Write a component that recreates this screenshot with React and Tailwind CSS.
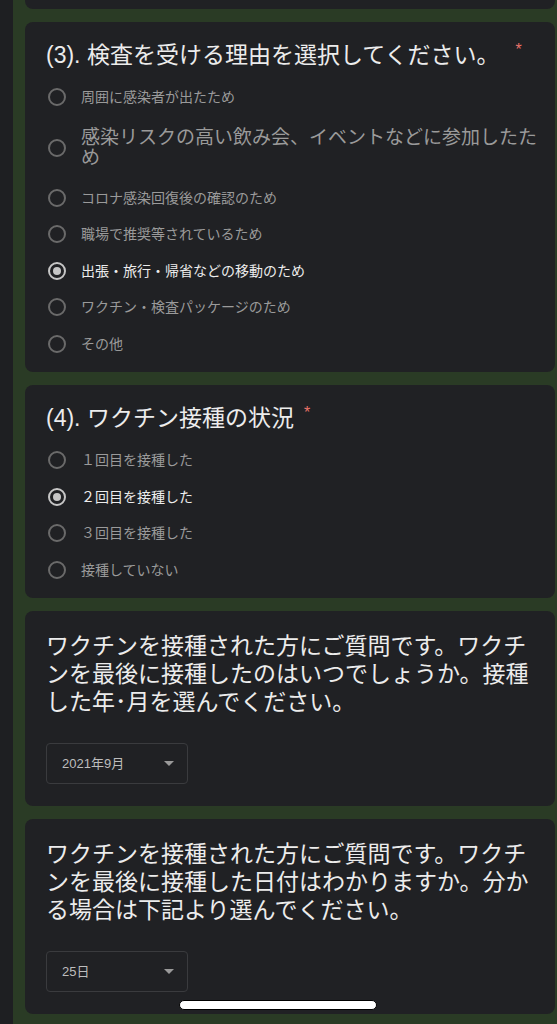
const font = "font-['Liberation_Sans','Noto_Sans_CJK_JP',sans-serif]";

const reasons = [
  { label: "周囲に感染者が出たため" },
  { label: "感染リスクの高い飲み会、イベントなどに参加したた", tail: "め", big: true },
  { label: "コロナ感染回復後の確認のため" },
  { label: "職場で推奨等されているため" },
  { label: "出張・旅行・帰省などの移動のため", checked: true },
  { label: "ワクチン・検査パッケージのため" },
  { label: "その他" },
];

const doses = [
  { label: "１回目を接種した" },
  { label: "２回目を接種した", checked: true },
  { label: "３回目を接種した" },
  { label: "接種していない" },
];

const Radio = ({ checked }) => (
  <span
    className={
      "ml-[2px] flex h-[18px] w-[18px] shrink-0 items-center justify-center rounded-full border-2 " +
      (checked ? "border-[#c6c6c6]" : "border-[#6a6a6a]")
    }
  >
    {checked && <span className="h-[8px] w-[8px] rounded-full bg-[#c6c6c6]" />}
  </span>
);

const Option = ({ label, tail, big, checked }) => (
  <div className={"flex items-center gap-[15px] " + (big ? "h-[64px]" : "h-[36.5px]")}>
    <Radio checked={checked} />
    {big ? (
      <span className="text-[19px] leading-[20px] text-[#9a9a9a]">
        {label}
        <br />
        {tail}
      </span>
    ) : (
      <span className={"text-[14px] leading-[18px] " + (checked ? "text-[#ececec]" : "text-[#9a9a9a]")}>
        {label}
      </span>
    )}
  </div>
);

const Card = ({ children, className = "" }) => (
  <div className={"rounded-[8px] bg-[#202124] pl-[21px] pr-[18px] " + className}>{children}</div>
);

const Dropdown = ({ value }) => (
  <div className="flex h-[41.5px] w-[142px] items-center justify-between rounded-[4px] border border-[#3a3b3e] pl-[15px] pr-[13px]">
    <span className="text-[13px] text-[#bdbdbd]">{value}</span>
    <svg width="10" height="5" viewBox="0 0 10 5">
      <path d="M0 0h10L5 5z" fill="#9a9a9a" />
    </svg>
  </div>
);

export default function App() {
  return (
    <div className={"relative flex h-[1024px] w-[557px] overflow-hidden bg-[#1e1f22] " + font}>
      <div className="w-[13px] shrink-0 bg-[#1e1f22]" />
      <div className="flex flex-1 flex-col gap-[13px] bg-[#2a3b25] pl-[12px] pr-[2px]">
        <div className="h-[9px] shrink-0 rounded-b-[8px] bg-[#202124]" />

        <Card className="pt-[18px] pb-[10px]">
          <div className="flex h-[30px] items-center text-[23px] leading-[30px] text-[#ececec]">
            <span>(3). 検査を受ける理由を選択してください。</span>
            <span className="ml-[16px] -mt-[10px] text-[16px] text-[#e8736a]">*</span>
          </div>
          <div className="mt-[9px] flex flex-col">
            {reasons.map((r) => (
              <Option key={r.label} {...r} />
            ))}
          </div>
        </Card>

        <Card className="pt-[18px] pb-[10px]">
          <div className="flex h-[30px] items-center text-[23px] leading-[30px] text-[#ececec]">
            <span>(4). ワクチン接種の状況</span>
            <span className="ml-[10px] -mt-[10px] text-[16px] text-[#e8736a]">*</span>
          </div>
          <div className="mt-[9px] flex flex-col">
            {doses.map((d) => (
              <Option key={d.label} {...d} />
            ))}
          </div>
        </Card>

        <Card className="pt-[20.5px] pb-[22px]">
          <p className="whitespace-nowrap text-[23px] leading-[28px] text-[#ececec]">
            ワクチンを接種された方にご質問です。ワクチ
            <br />
            ンを最後に接種したのはいつでしょうか。接種
            <br />
            した年･月を選んでください。
          </p>
          <div className="mt-[27px]">
            <Dropdown value="2021年9月" />
          </div>
        </Card>

        <Card className="pt-[20.5px] pb-[22px]">
          <p className="whitespace-nowrap text-[23px] leading-[28px] text-[#ececec]">
            ワクチンを接種された方にご質問です。ワクチ
            <br />
            ンを最後に接種した日付はわかりますか。分か
            <br />
            る場合は下記より選んでください。
          </p>
          <div className="mt-[27px]">
            <Dropdown value="25日" />
          </div>
        </Card>
      </div>

      <div className="absolute left-[179px] top-[1000px] h-[10px] w-[198px] rounded-full border border-black bg-white" />
    </div>
  );
}
